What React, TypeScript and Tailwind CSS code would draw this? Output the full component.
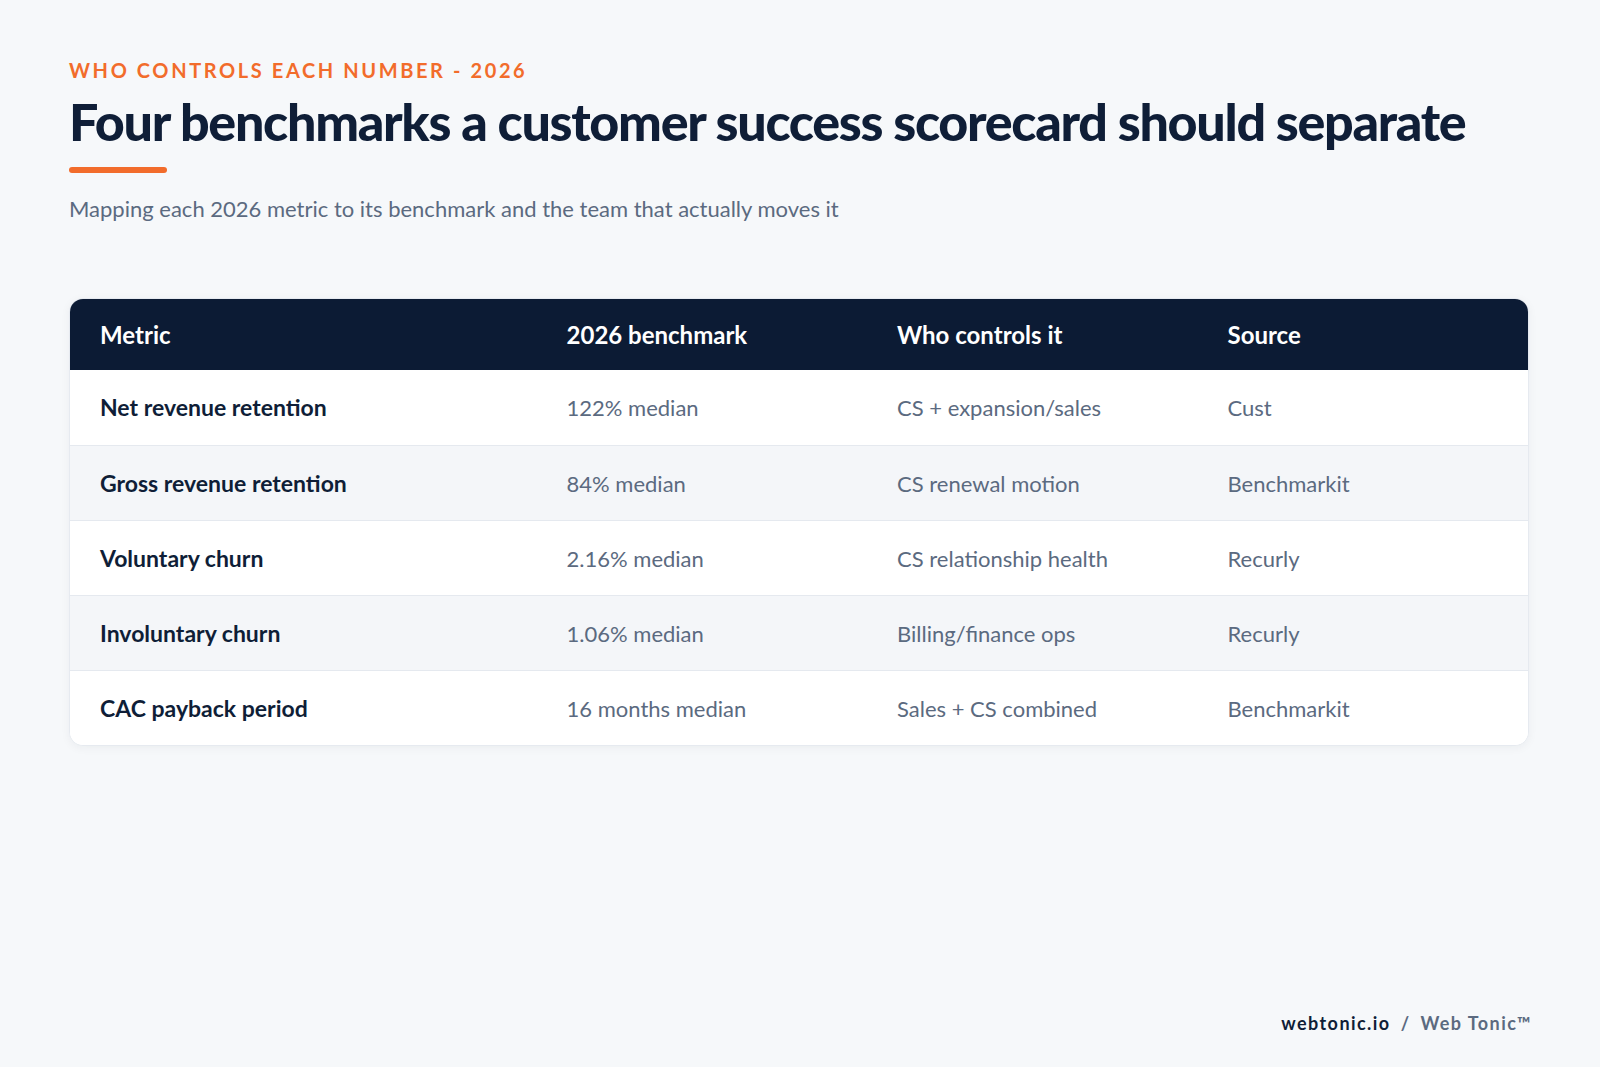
const ROWS = [
  { metric: 'Net revenue retention', bench: '122% median', who: 'CS + expansion/sales', source: 'Cust' },
  { metric: 'Gross revenue retention', bench: '84% median', who: 'CS renewal motion', source: 'Benchmarkit' },
  { metric: 'Voluntary churn', bench: '2.16% median', who: 'CS relationship health', source: 'Recurly' },
  { metric: 'Involuntary churn', bench: '1.06% median', who: 'Billing/finance ops', source: 'Recurly' },
  { metric: 'CAC payback period', bench: '16 months median', who: 'Sales + CS combined', source: 'Benchmarkit' },
];

export default function App() {
  return (
    <div
      className="min-h-screen w-full bg-[#f6f8fa] flex flex-col pl-[69px] pr-[71px]"
      style={{ fontFamily: 'Lato, "Noto Sans", sans-serif' }}
    >
      {/* HEADER */}
      <div className="pt-[58px]">
        <p className="text-[20px] leading-[24px] font-bold tracking-[0.13em] text-[#f26c2b] uppercase">
          Who controls each number - 2026
        </p>
        <h1 className="mt-[11px] text-[52px] leading-[56px] font-black tracking-[-0.025em] text-[#0f1e37]">
          Four benchmarks a customer success scorecard should separate
        </h1>
        <div className="mt-[18px] w-[98px] h-[6px] rounded-full bg-[#f26c2b]" />
        <p className="mt-[22px] text-[22px] leading-[28px] text-[#5b6a80]">
          Mapping each 2026 metric to its benchmark and the team that actually moves it
        </p>
      </div>

      {/* TABLE */}
      <div className="mt-[75px] bg-white rounded-[14px] border border-[#e6eaf0] shadow-[0_2px_10px_rgba(15,30,55,0.05)] overflow-hidden">
        <div className="grid grid-cols-[32%_1fr_1fr_1fr] bg-[#0c1b34] h-[71px] items-center text-white text-[24px] font-bold">
          <div className="px-[30px]">Metric</div>
          <div className="px-[30px]">2026 benchmark</div>
          <div className="px-[30px]">Who controls it</div>
          <div className="px-[30px]">Source</div>
        </div>
        {ROWS.map((r, i) => (
          <div
            key={r.metric}
            className={`grid grid-cols-[32%_1fr_1fr_1fr] h-[75px] items-center text-[22px] ${
              i % 2 === 1 ? 'bg-[#f4f6f9]' : 'bg-white'
            } ${i > 0 ? 'border-t border-[#e5e9ef]' : ''}`}
          >
            <div className="px-[30px] text-[23px] font-bold text-[#0f1e37]">{r.metric}</div>
            <div className="px-[30px] text-[#5b6a80]">{r.bench}</div>
            <div className="px-[30px] text-[#5b6a80]">{r.who}</div>
            <div className="px-[30px] text-[#5b6a80]">{r.source}</div>
          </div>
        ))}
      </div>

      <div className="flex-1" />

      {/* FOOTER */}
      <div className="flex justify-end -mr-[3px] pb-[30px] text-[18px] font-bold tracking-[0.08em]">
        <span className="text-[#0f1e37]">webtonic.io</span>
        <span className="mx-[10px] text-[#5b6a80]">/</span>
        <span className="text-[#5b6a80]">Web Tonic™</span>
      </div>
    </div>
  );
}
